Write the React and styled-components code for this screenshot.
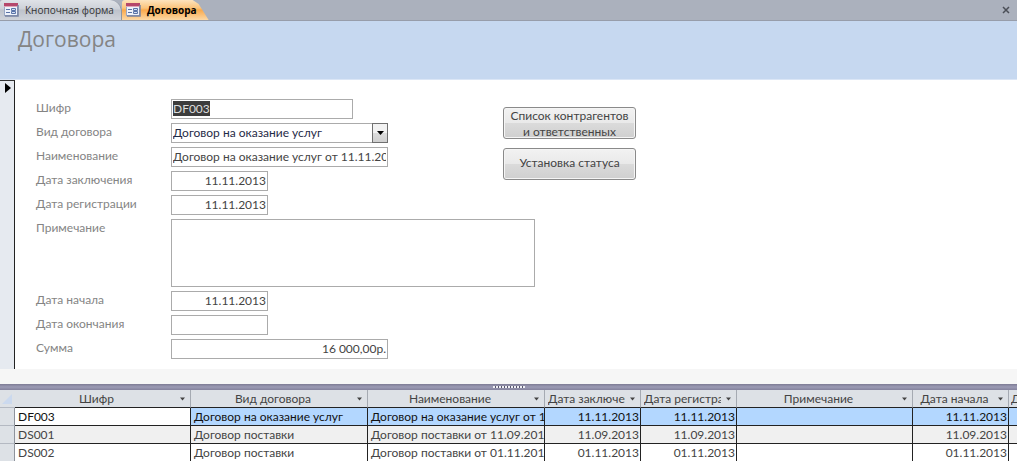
import React, { useEffect, useRef } from 'react';
import styled, { createGlobalStyle } from 'styled-components';

const columns = [
  { key: 'code', title: 'Шифр', width: 176 },
  { key: 'kind', title: 'Вид договора', width: 177 },
  { key: 'name', title: 'Наименование', width: 177 },
  { key: 'signed', title: 'Дата заключения', width: 96, right: true },
  { key: 'registered', title: 'Дата регистрации', width: 96, right: true },
  { key: 'note', title: 'Примечание' },
  { key: 'start', title: 'Дата начала', width: 96, right: true },
  { key: 'end', title: 'Дата окончания', width: 8, right: true, narrow: true },
];

const rows = [
  { code: 'DF003', kind: 'Договор на оказание услуг', name: 'Договор на оказание услуг от 11.11.2013', signed: '11.11.2013', registered: '11.11.2013', start: '11.11.2013' },
  { code: 'DS001', kind: 'Договор поставки', name: 'Договор поставки от 11.09.2013', signed: '11.09.2013', registered: '11.09.2013', start: '11.09.2013' },
  { code: 'DS002', kind: 'Договор поставки', name: 'Договор поставки от 01.11.2013', signed: '01.11.2013', registered: '01.11.2013', start: '01.11.2013' },
];

const FormIcon = () => (
  <svg width="15" height="14" viewBox="0 0 15 14" aria-hidden="true">
    <rect x="0.5" y="0.5" width="13" height="12" fill="#eef2fa" stroke="#9aa8c4" />
    <rect x="0" y="0" width="14" height="3" fill="#b5476b" />
    <path d="M0 3.5h14" stroke="#dfa5b8" />
    <path d="M14 2v11H1" fill="none" stroke="#7783a2" strokeWidth="1.5" />
    <path d="M2 6.5h4M2 9.5h4" stroke="#5a74a8" />
    <path d="M7.5 5.5h4v2h-4zM7.5 8.5h4v2h-4z" fill="#d3def2" stroke="#5a74a8" />
  </svg>
);

const Arrow = ({ size }) => (
  <svg width={size} height="4" viewBox="0 0 7 4" aria-hidden="true">
    <path d="M0 0h7L3.5 4z" fill="currentColor" />
  </svg>
);

const App = () => {
  const codeRef = useRef(null);

  useEffect(() => {
    codeRef.current.focus();
    codeRef.current.select();
  }, []);

  return (
    <Window>
      <GlobalStyle />
      <TabBar>
        <Tab><FormIcon />Кнопочная форма</Tab>
        <Tab $active><FormIcon />Договора</Tab>
        <CloseButton aria-label="Закрыть">
          <svg width="8" height="8" viewBox="0 0 8 8">
            <path d="M1 1l6 6M7 1L1 7" stroke="#4b4f57" strokeWidth="1.5" />
          </svg>
        </CloseButton>
      </TabBar>
      <FormHeader>
        <Title>Договора</Title>
      </FormHeader>
      <FormBody>
        <RecordSelector>
          <svg width="6" height="10" viewBox="0 0 6 10">
            <path d="M0 0l6 5-6 5z" fill="#000" />
          </svg>
        </RecordSelector>
        <Fields>
          <Label htmlFor="code">Шифр</Label>
          <TextBox id="code" ref={codeRef} $width={182} defaultValue="DF003" />
          <Label htmlFor="kind">Вид договора</Label>
          <Combo>
            <Select id="kind">
              <option>Договор на оказание услуг</option>
              <option>Договор поставки</option>
            </Select>
            <ComboButton><Arrow size={7} /></ComboButton>
          </Combo>
          <Label htmlFor="name">Наименование</Label>
          <TextBox id="name" $width={217} defaultValue="Договор на оказание услуг от 11.11.20" />
          <Label htmlFor="signed">Дата заключения</Label>
          <TextBox id="signed" $width={97} $right defaultValue="11.11.2013" />
          <Label htmlFor="registered">Дата регистрации</Label>
          <TextBox id="registered" $width={97} $right defaultValue="11.11.2013" />
          <Label htmlFor="note">Примечание</Label>
          <NoteBox id="note" />
          <Label htmlFor="start">Дата начала</Label>
          <TextBox id="start" $width={97} $right defaultValue="11.11.2013" />
          <Label htmlFor="end">Дата окончания</Label>
          <TextBox id="end" $width={97} $right />
          <Label htmlFor="sum">Сумма</Label>
          <TextBox id="sum" $width={217} $right defaultValue="16 000,00р." />
        </Fields>
        <Actions>
          <ActionButton>Список контрагентов и ответственных</ActionButton>
          <ActionButton>Установка статуса</ActionButton>
        </Actions>
      </FormBody>
      <FormFooter />
      <Splitter>
        <Grip />
      </Splitter>
      <Sheet>
        <colgroup>
          <Col $width={15} />
          {columns.map((column) => <Col key={column.key} $width={column.width} />)}
        </colgroup>
        <thead>
          <tr>
            <CornerCell>
              <svg width="10" height="10" viewBox="0 0 10 10">
                <path d="M10 0v10H0z" fill="#cbd9ee" />
              </svg>
            </CornerCell>
            {columns.map((column) => (
              <HeadCell key={column.key} $narrow={column.narrow}>
                <HeadContent>
                  <HeadTitle $left={column.title.length > 12}>{column.title}</HeadTitle>
                  {!column.narrow && <Arrow size={5} />}
                </HeadContent>
              </HeadCell>
            ))}
          </tr>
        </thead>
        <tbody>
          {rows.map((row, index) => (
            <Row key={row.code} $selected={index === 0} $odd={index === 1}>
              <RowSelector />
              {columns.map((column) => (
                <Cell key={column.key} $right={column.right}>{row[column.key]}</Cell>
              ))}
            </Row>
          ))}
        </tbody>
      </Sheet>
    </Window>
  );
};

const GlobalStyle = createGlobalStyle`
  * {
    box-sizing: border-box;
  }
  body {
    margin: 0;
    background: #fff;
    overflow: hidden;
  }
  body, input, select, textarea, button {
    font-family: Lato, "Open Sans", sans-serif;
    font-size: 12px;
    color: #444;
  }
`;

const Window = styled.main`
  margin-right: 7px;
  overflow: hidden;
`;

const TabBar = styled.nav`
  display: flex;
  height: 21px;
  background: #abb1bd;
  border-bottom: 1px solid #979daa;
`;

const Tab = styled.button`
  display: flex;
  align-items: center;
  gap: 6px;
  height: 20px;
  padding: 0 ${(props) => (props.$active ? 12 : 7)}px 0 4px;
  border: 0;
  border-radius: 3px 12px 0 0;
  clip-path: ${(props) => (props.$active ? 'polygon(0 0, calc(100% - 16px) 0, calc(100% - 10px) 4px, 100% 100%, 0 100%)' : 'none')};
  background: ${(props) => (props.$active
    ? 'linear-gradient(#fde3bd, #fbc47c 40%, #f9a94c 50%, #fcd9a6)'
    : 'linear-gradient(#dfe2e7, #cdd1d8 45%, #bdc2cb 50%, #cfd3da)')};
  border-right: ${(props) => (props.$active ? '0' : '1px solid #8e95a2')};
  font-family: "Open Sans", sans-serif;
  font-size: 10px;
  font-weight: ${(props) => (props.$active ? 700 : 400)};
  color: ${(props) => (props.$active ? '#000' : '#333')};
  white-space: nowrap;
`;

const CloseButton = styled.button`
  display: flex;
  align-items: center;
  margin-left: auto;
  padding: 0 7px;
  border: 0;
  background: none;
`;

const FormHeader = styled.header`
  height: 59px;
  padding: 4px 18px;
  background: #c6d8f0;
  border-bottom: 1px solid #dbe6f6;
`;

const Title = styled.h1`
  margin: 0;
  font-family: "Open Sans", sans-serif;
  font-size: 21px;
  line-height: 28px;
  font-weight: 400;
  color: #848484;
`;

const FormBody = styled.section`
  display: flex;
  height: 289px;
`;

const RecordSelector = styled.div`
  width: 15px;
  padding: 2px 5px;
  line-height: 0;
  background: #e6eaf0;
  border-top: 1px solid #333;
  border-right: 1px solid #222;
`;

const Fields = styled.div`
  display: grid;
  grid-template-columns: 135px 364px;
  align-content: start;
  row-gap: 4px;
  padding: 19px 0 0 21px;
`;

const Label = styled.label`
  line-height: 18px;
  color: #848484;
`;

const TextBox = styled.input`
  width: ${(props) => props.$width}px;
  height: 20px;
  padding: 0 1px 2px;
  border: 1px solid #ababab;
  outline: 0;
  text-align: ${(props) => (props.$right ? 'right' : 'left')};
  &::selection {
    background: #3c3c3c;
    color: #dcdcdc;
  }
`;

const Combo = styled.div`
  display: flex;
  position: relative;
  width: 217px;
`;

const Select = styled.select`
  appearance: none;
  width: 100%;
  height: 20px;
  padding: 0 1px 2px;
  border: 1px solid #ababab;
  border-radius: 0;
  background: #fff;
  color: #1f2b47;
`;

const ComboButton = styled.span`
  position: absolute;
  right: 0;
  top: 0;
  display: flex;
  align-items: center;
  justify-content: center;
  width: 16px;
  height: 20px;
  border: 1px solid #707070;
  background: linear-gradient(#f2f2f2 50%, #dcdcdc 50%, #d0d0d0);
  color: #000;
  pointer-events: none;
`;

const NoteBox = styled.textarea`
  height: 68px;
  border: 1px solid #ababab;
  outline: 0;
  resize: none;
`;

const Actions = styled.div`
  display: flex;
  flex-direction: column;
  gap: 9px;
  width: 133px;
  margin-left: -32px;
  padding-top: 27px;
`;

const ActionButton = styled.button`
  height: 32px;
  padding: 0 4px 2px;
  border: 1px solid #8a8a8a;
  border-radius: 3px;
  background: linear-gradient(#f2f2f2, #e9e9e9 50%, #dbdbdb 50%, #cfcfcf);
  box-shadow: inset 0 0 0 1px #f5f5f5;
  line-height: 16px;
`;

const FormFooter = styled.footer`
  height: 15px;
  background: #f6f6f6;
`;

const Splitter = styled.div`
  display: flex;
  justify-content: center;
  height: 6px;
  background: linear-gradient(#7d7b94, #9c9bb5 50%, #84829d);
`;

const Grip = styled.span`
  width: 32px;
  height: 2px;
  margin-top: 2px;
  background: repeating-linear-gradient(90deg, #f0f0f5 0 2px, #55536b 2px 3px);
`;

const Sheet = styled.table`
  width: 100%;
  table-layout: fixed;
  border-collapse: separate;
  border-spacing: 0;
`;

const Col = styled.col`
  width: ${(props) => (props.$width ? `${props.$width}px` : 'auto')};
`;

const HeadCell = styled.th`
  height: 18px;
  padding: 0 ${(props) => (props.$narrow ? 0 : 5)}px 0 ${(props) => (props.$narrow ? 2 : 3)}px;
  overflow: hidden;
  background: #dde1e6;
  border-right: ${(props) => (props.$narrow ? 0 : 1)}px solid #a5aab2;
  border-bottom: 1px solid #222;
  font-weight: 400;
  line-height: 17px;
`;

const CornerCell = styled.td`
  padding: 0 3px 0 2px;
  background: #dde1e6;
  border-bottom: 1px solid #b4b9c2;
  line-height: 0;
`;

const HeadContent = styled.div`
  display: flex;
  align-items: center;
  gap: 5px;
`;

const HeadTitle = styled.span`
  flex: 1;
  overflow: hidden;
  white-space: nowrap;
  text-align: ${(props) => (props.$left ? 'left' : 'center')};
`;

const Cell = styled.td`
  height: 18px;
  padding: 1px ${(props) => (props.$right ? 1 : 0)}px 0 3px;
  overflow: hidden;
  border-right: 1px solid #222;
  border-bottom: 1px solid #222;
  line-height: 16px;
  white-space: nowrap;
  text-align: ${(props) => (props.$right ? 'right' : 'left')};
  &:last-child {
    border-right: 0;
  }
`;

const RowSelector = styled.td`
  background: #dde1e6;
  border-right: 1px solid #8e939c;
  border-bottom: 1px solid #b4b9c2;
`;

const Row = styled.tr`
  ${Cell} {
    background: ${(props) => (props.$selected ? '#b3d7ff' : props.$odd ? '#f0f0f0' : '#fff')};
    color: ${(props) => (props.$selected ? '#111' : '#444')};
  }
  ${Cell}:nth-child(2) {
    background: ${(props) => (props.$odd ? '#f0f0f0' : '#fff')};
  }
`;

export default App;
